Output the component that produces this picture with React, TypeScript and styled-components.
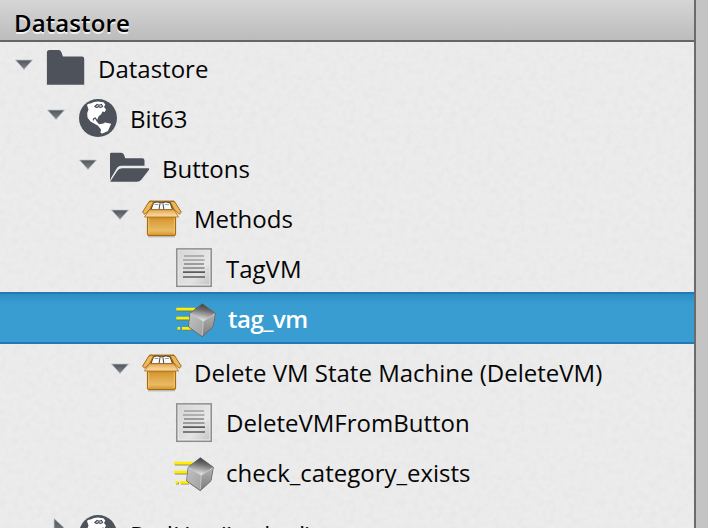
import React from 'react';
import styled, { createGlobalStyle, css } from 'styled-components';

const grain = `url("data:image/svg+xml,%3Csvg xmlns='http://www.w3.org/2000/svg' width='200' height='200'%3E%3Cfilter id='n' x='0' y='0' width='100%25' height='100%25'%3E%3CfeTurbulence type='fractalNoise' baseFrequency='.16' numOctaves='2' stitchTiles='stitch'/%3E%3CfeColorMatrix values='0 0 0 0 .5 0 0 0 0 .5 0 0 0 0 .5 .2 0 0 0 -.07'/%3E%3C/filter%3E%3Crect width='200' height='200' filter='url(%23n)'/%3E%3C/svg%3E")`;

const GlobalStyle = createGlobalStyle`
  * { box-sizing: border-box; }
  body { margin: 0; overflow: hidden; background: #c4c4c4; }
`;

const Page = styled.div`
  height: 528px;
  overflow: hidden;
  background: #c4c4c4;
  font-family: 'Open Sans', sans-serif;
  color: #050505;
`;

const Panel = styled.section`
  display: flex;
  flex-direction: column;
  width: 696px;
  height: 528px;
  overflow: hidden;
  border-right: 2px solid #6b6b6b;
  background: #ececec ${grain};
`;

const Header = styled.header`
  flex: none;
  height: 42px;
  padding: 2px 0 0 14px;
  border-bottom: 2px solid #656565;
  background: linear-gradient(#d6d6d6, #bcbcbc);
  font-size: 24px;
  font-weight: 600;
  line-height: 42px;
  letter-spacing: .1px;
  text-shadow: 0 2px 0 #f1f1f1;
  color: #000;
`;

const Tree = styled.div`
  display: flex;
  flex-direction: column;
  padding-top: 2px;
`;

const Row = styled.div<{ $level: number; $selected?: boolean; $gap?: number; $nudge?: number; $short?: boolean }>`
  display: flex;
  flex: none;
  align-items: center;
  height: ${p => (p.$short ? 48 : 50)}px;
  margin-top: ${p => p.$gap ?? 0}px;
  padding-left: ${p => 14 + p.$level * 32 + (p.$nudge ?? 0)}px;
  ${p => p.$selected && css`
    height: 52px;
    border: solid #2379b5;
    border-width: 2px 0;
    background: linear-gradient(#2c8fc3, #3a9dd1 10px, #3a9dd1);
    color: #fff;
  `}
`;

const ArrowSlot = styled.span`
  display: flex;
  width: 32px;
  height: 38px;
  padding-top: 8px;
  svg { display: block; overflow: visible; }
`;

const IconSlot = styled.span<{ $indent?: boolean; $low?: boolean }>`
  display: flex;
  width: 52px;
  padding-left: ${p => (p.$indent ? 2 : 0)}px;
  padding-top: ${p => (p.$low ? 2 : 0)}px;
  svg { display: block; overflow: visible; }
`;

const Label = styled.span<{ $strong?: boolean; $low?: boolean }>`
  padding-top: ${p => (p.$low ? 2 : 0)}px;
  font-size: 24px;
  line-height: 48px;
  white-space: nowrap;
  font-weight: ${p => (p.$strong ? 600 : 400)};
  letter-spacing: ${p => (p.$strong ? '-.5px' : 'normal')};
`;

const Arrow = ({ closed }: { closed?: boolean }) => (
  <svg width="20" height="20" viewBox="0 0 20 20">
    <defs>
      <linearGradient id="arrow" x2="0" y2="1">
        <stop stopColor="#50565c" /><stop offset="1" stopColor="#80868b" />
      </linearGradient>
    </defs>
    {closed
      ? <path d="M8-5.500v18L18 3.500z" fill="url(#arrow)" stroke="#c5cacd" strokeWidth=".8" />
      : <path d="M1.500 2h17L10 11.600z" fill="url(#arrow)" stroke="#bfc4c7" strokeWidth=".8" />}
  </svg>
);

const Folder = () => (
  <svg width="40" height="40" viewBox="0 0 40 40">
    <path d="M.9 35.700V3.500Q.9 1 3.400 1h9.200q2 0 2.800 2.300l1.500 4.200h19.100q2.200 0 2.200 2.200v26z" fill="#4d525b" />
  </svg>
);

const Globe = () => (
  <svg width="40" height="40" viewBox="0 0 40 40">
    <circle cx="20" cy="19" r="19" fill="#4d525b" />
    <path
      fill="#fff"
      d="M9 6Q9.500 4.300 12.500 4.500Q16 2.500 20 2.500L25.500 3.200L27.300 5.500L26 8L28 10.500L26.800 13L24.500 12.500L23 15.500L20.800 17L19.500 20L18.500 22L21.500 24.500L27 23.600L33.200 24.800L31 29.500L30 32L24.500 34.500L22.500 34L23 30.500L20 26.800L16.500 24.800L12.500 22.500L9.500 18.500L9.200 14L10.500 10.500z"
    />
    <path d="M17 7.500l2-2 2 .8 2.500-.8 1 2-2 1-2-1-1.500 1zM15.500 21.500q-.5-2.500 2-2.300 1.500 3 3.800 5.300l5-1" fill="none" stroke="#4d525b" strokeWidth="1.300" />
  </svg>
);

const OpenFolder = () => (
  <svg width="40" height="40" viewBox="0 0 40 40">
    <path d="M0 32V4.700Q0 3.700 1.500 3.700h9.500q2.300 0 3 2l1.200 3.600h17q2.300 0 2.300 2.300v5.200H11.500q-3.500 0-5 3L1 29z" fill="#4d525b" />
    <path d="M.2 32.800L7 22.300Q8.800 19.300 12 19.300h26.200q1.800 0 .8 1.500L31.500 30.500Q29.600 32.800 27 32.800z" fill="#4d525b" />
  </svg>
);

const Box = () => (
  <svg width="40" height="40" viewBox="0 0 40 40">
    <defs>
      <linearGradient id="boxFront" x2="0" y2="1">
        <stop stopColor="#bd7b16" /><stop offset=".2" stopColor="#d99c36" /><stop offset=".75" stopColor="#e9ba65" /><stop offset="1" stopColor="#d59322" />
      </linearGradient>
      <linearGradient id="boxFlap" x2="0" y2="1">
        <stop stopColor="#e0a550" /><stop offset=".5" stopColor="#f2c580" /><stop offset="1" stopColor="#fbdca4" />
      </linearGradient>
    </defs>
    <path d="M6 37.600h27" stroke="#888" strokeWidth="1.500" opacity=".5" />
    <path d="M7.500 2h24.500l2 9H5.500z" fill="#bd7a19" stroke="#9b6110" strokeWidth=".8" />
    <path d="M11.500 3.800Q15 2 19.300 4Q24 2 28 3.800L30.500 10.500H9z" fill="#fafafa" stroke="#38332a" strokeWidth=".9" />
    <path d="M18 4.500l-1 6M21 4.500l.8 6" fill="none" stroke="#333" strokeWidth=".9" />
    <path d="M12.500 5.500h4M23 5.500h4" stroke="#888" strokeWidth=".8" />
    <path d="M9.500 2.200L6.800 3 .5 13.300 3 15.300 8 10 11.500 3zM30 2.200l2.800.8L39.300 13.300 37 15.300 31.800 10 28.300 3z" fill="#edb858" stroke="#9b6110" strokeWidth=".9" />
    <rect x="5.500" y="17" width="28" height="19.500" rx="1.500" fill="url(#boxFront)" stroke="#a76c10" strokeWidth="1.200" />
    <path d="M6.700 35V19M32.300 19v16" stroke="#f8cc7c" strokeWidth=".8" />
    <path d="M7.500 10.700h24.500l4.500 7.300h-34z" fill="url(#boxFlap)" stroke="#b47924" strokeWidth=".9" />
  </svg>
);

const Document = () => (
  <svg width="40" height="40" viewBox="0 0 40 40">
    <defs>
      <linearGradient id="paper" x2="1" y2="1">
        <stop stopColor="#cdcdcd" /><stop offset=".65" stopColor="#e3e3e3" /><stop offset="1" stopColor="#c6c6c6" />
      </linearGradient>
    </defs>
    <rect x=".8" y=".9" width="34.400" height="37.400" fill="#eee" stroke="#8c8c8c" strokeWidth="1.500" />
    <rect x="2.500" y="2.500" width="31" height="34" fill="url(#paper)" />
    <path d="M3 3h30v15Q16 16 3 26z" fill="#fff" opacity=".18" />
    <path d="M8 8h20M7 12h21.500" stroke="#a0a0a0" strokeWidth="1.600" />
    <path d="M8 16h20M7 20h21.500" stroke="#858585" strokeWidth="1.600" />
    <path d="M7 24.200h22M7 29h22" stroke="#5c5c5c" strokeWidth="1.700" />
  </svg>
);

const Method = () => (
  <svg width="40" height="40" viewBox="0 0 40 40">
    <defs>
      <linearGradient id="cubeTop" x1=".65" y1="0" x2=".4" y2="1">
        <stop stopColor="#3d3d3d" /><stop offset=".35" stopColor="#6c6c6c" /><stop offset="1" stopColor="#f4f4f4" />
      </linearGradient>
      <linearGradient id="cubeLeft" x2="1" y2="1">
        <stop stopColor="#c2c2c2" /><stop offset="1" stopColor="#a0a0a0" />
      </linearGradient>
      <linearGradient id="cubeRight" x2="0" y2="1">
        <stop stopColor="#b4b4b4" /><stop offset="1" stopColor="#7c7c7c" />
      </linearGradient>
    </defs>
    <path d="M.8 11.400H19M.8 20.400H15M2 30.400h3M7 30.400H15" stroke="#77733c" strokeWidth="2.400" opacity=".75" />
    <path d="M.3 10.200H19M.3 19.200H15M1.500 29.300h2.700M6 29.300H15" stroke="#ffed00" strokeWidth="2.800" />
    <path d="M26.300 4.700L39.300 14.300 37 27.700 26.300 37.700 12.700 28 14.200 14.300z" fill="#666" stroke="#666" strokeWidth="1" strokeLinejoin="round" />
    <path d="M26.300 5L39 14.300 27.300 22.500 14.500 14.300z" fill="url(#cubeTop)" />
    <path d="M14.300 14.300L27.300 22.500 26.300 37.300 12.900 27.700z" fill="url(#cubeLeft)" />
    <path d="M27.300 22.500L39 14.300 36.800 27.500 26.300 37.300z" fill="url(#cubeRight)" />
    <path d="M14.500 14.500L27.300 22.500 38.500 14.800M27.300 22.500L26.300 36.500" fill="none" stroke="#d8d8d8" strokeWidth=".7" />
  </svg>
);

const icons = { folder: Folder, globe: Globe, open: OpenFolder, box: Box, document: Document, method: Method };

interface Item {
  label: string;
  icon: keyof typeof icons;
  level: number;
  arrow?: 'open' | 'closed';
  selected?: boolean;
  gap?: number;
  nudge?: number;
  short?: boolean;
}

const items: Item[] = [
  { label: 'Datastore', icon: 'folder', level: 0, arrow: 'open' },
  { label: 'Bit63', icon: 'globe', level: 1, arrow: 'open' },
  { label: 'Buttons', icon: 'open', level: 2, arrow: 'open' },
  { label: 'Methods', icon: 'box', level: 3, arrow: 'open' },
  { label: 'TagVM', icon: 'document', level: 4, short: true },
  { label: 'tag_vm', icon: 'method', level: 4, selected: true, nudge: 2 },
  { label: 'Delete VM State Machine (DeleteVM)', icon: 'box', level: 3, arrow: 'open', gap: 4 },
  { label: 'DeleteVMFromButton', icon: 'document', level: 4 },
  { label: 'check_category_exists', icon: 'method', level: 4 },
  { label: 'RedHat (Locked)', icon: 'globe', level: 1, arrow: 'closed', gap: 12 },
];

export default function App() {
  return (
    <Page>
      <GlobalStyle />
      <Panel>
        <Header>Datastore</Header>
        <Tree role="tree">
          {items.map(item => {
            const Icon = icons[item.icon];
            return (
              <Row key={item.label} role="treeitem" $level={item.level} $selected={item.selected} $gap={item.gap} $nudge={item.nudge} $short={item.short}>
                <ArrowSlot>{item.arrow && <Arrow closed={item.arrow === 'closed'} />}</ArrowSlot>
                <IconSlot $indent={item.icon === 'document'} $low={item.selected}><Icon /></IconSlot>
                <Label $strong={item.selected} $low={item.selected || item.short}>{item.label}</Label>
              </Row>
            );
          })}
        </Tree>
      </Panel>
    </Page>
  );
}
